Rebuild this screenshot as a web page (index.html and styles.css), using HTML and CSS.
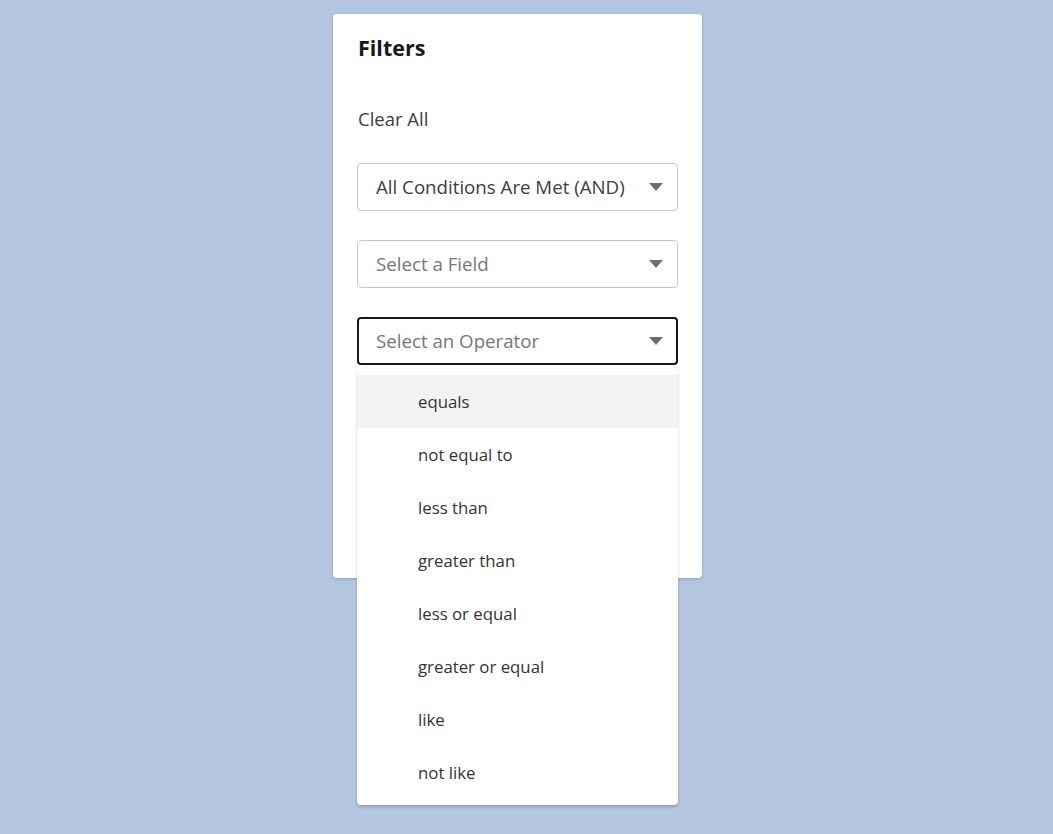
FILE: index.html
```html
<!DOCTYPE html>
<html>
<head>
<meta charset="utf-8">
<link rel="stylesheet" href="styles.css">
</head>
<body>
<div class="page">
  <section class="card">
    <h2 class="title">Filters</h2>
    <div class="clear">Clear All</div>
    <div class="fields">
      <div class="select">
        <span class="value">All Conditions Are Met (AND)</span>
        <svg class="arrow" width="14" height="8" viewBox="0 0 14 8"><path d="M0 0 H14 L7 8 Z"/></svg>
      </div>
      <div class="select">
        <span class="value placeholder">Select a Field</span>
        <svg class="arrow" width="14" height="8" viewBox="0 0 14 8"><path d="M0 0 H14 L7 8 Z"/></svg>
      </div>
      <div class="select-wrap">
        <div class="select focused">
          <span class="value placeholder">Select an Operator</span>
          <svg class="arrow" width="14" height="8" viewBox="0 0 14 8"><path d="M0 0 H14 L7 8 Z"/></svg>
        </div>
        <ul class="menu">
          <li class="item active">equals</li>
          <li class="item">not equal to</li>
          <li class="item">less than</li>
          <li class="item">greater than</li>
          <li class="item">less or equal</li>
          <li class="item">greater or equal</li>
          <li class="item">like</li>
          <li class="item">not like</li>
        </ul>
      </div>
    </div>
  </section>
</div>
</body>
</html>
```

FILE: styles.css
```css
html, body {
  margin: 0;
  padding: 0;
}
body {
  background: #b3c5df;
  font-family: "Open Sans", "Noto Sans", sans-serif;
  color: #3e3e3c;
  min-height: 834px;
}
.page {
  padding-top: 14px;
  padding-left: 333px;
}
.card {
  width: 369px;
  height: 564px;
  box-sizing: border-box;
  background: #fff;
  border-radius: 4px;
  box-shadow: 0 1px 3px rgba(0, 0, 0, 0.18);
  padding: 22px 24px 0 24px;
}
.title {
  margin: 0 0 0 1px;
  font-size: 21.5px;
  line-height: 24px;
  font-weight: 700;
  color: #181818;
}
.clear {
  margin: 47px 0 0 1px;
  font-size: 18.5px;
  line-height: 24px;
  color: #3e3e3c;
}
.fields {
  margin-top: 32px;
  display: flex;
  flex-direction: column;
  gap: 29px;
}
.select-wrap {
  position: relative;
}
.select {
  height: 48px;
  box-sizing: border-box;
  border: 1px solid #c9c9c9;
  border-radius: 4px;
  display: flex;
  align-items: center;
  justify-content: space-between;
  padding: 0 14px 0 18px;
  background: #fff;
}
.select.focused {
  border: 2px solid #181818;
  padding: 0 13px 0 17px;
}
.value {
  font-size: 18.7px;
  color: #3e3e3c;
  margin-top: -2px;
}
.value.placeholder {
  color: #777;
}
.arrow {
  fill: #706e6b;
  display: block;
}
.menu {
  position: absolute;
  top: 52px;
  left: 0;
  width: 321px;
  box-sizing: border-box;
  margin: 0;
  padding: 6px 0;
  list-style: none;
  background: #fff;
  border-radius: 4px;
  box-shadow: 0 2px 3px rgba(0, 0, 0, 0.18), 0 0 1px rgba(0, 0, 0, 0.15);
}
.item {
  height: 53px;
  line-height: 53px;
  padding-left: 61px;
  font-size: 16.8px;
  color: #333;
}
.item.active {
  background: #f3f3f3;
}
```
